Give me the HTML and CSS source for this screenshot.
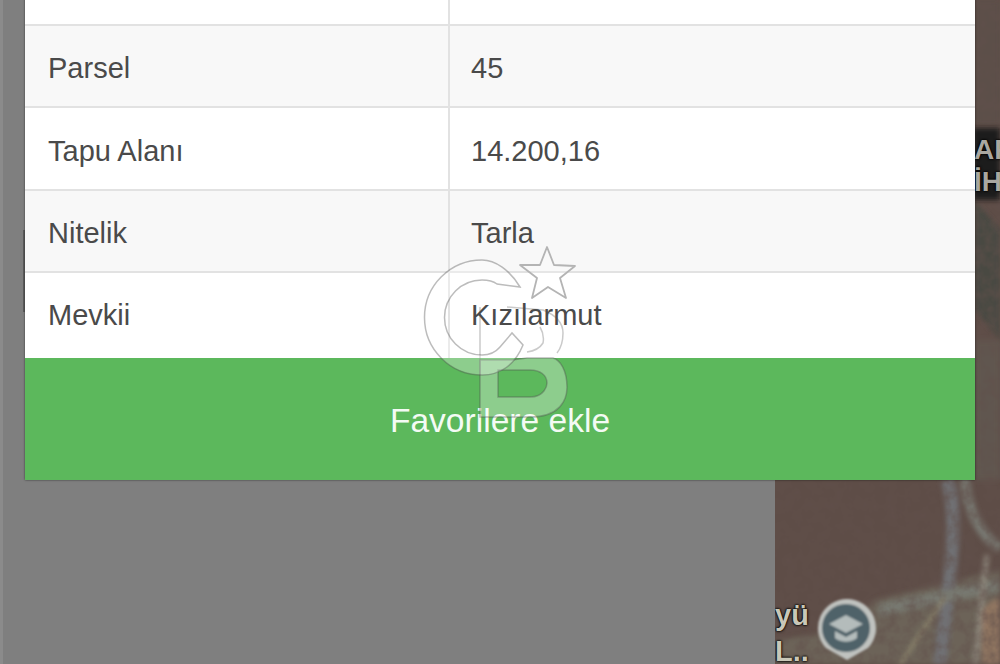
FILE: index.html
```html
<!DOCTYPE html>
<html lang="tr">
<head>
<meta charset="utf-8">
<title>Parsel bilgileri</title>
<link rel="stylesheet" href="styles.css">
</head>
<body>
<div class="backdrop">
  <div class="blank"></div>
  <div class="map">
    <svg class="map-art" viewBox="0 0 225 664" width="225" height="664" aria-hidden="true">
      <defs>
        <filter id="soft"><feGaussianBlur stdDeviation="2.4"/></filter>
        <filter id="softer"><feGaussianBlur stdDeviation="0.9"/></filter>
        <filter id="grain" x="0" y="0" width="100%" height="100%">
          <feTurbulence type="fractalNoise" baseFrequency="0.09" numOctaves="3" seed="7"/>
          <feColorMatrix values="0 0 0 0 .12  0 0 0 0 .08  0 0 0 0 .07  0 0 0 1.1 -.38"/>
        </filter>
      </defs>
      <rect width="225" height="664" fill="#5e4d47"/>
      <g filter="url(#soft)">
        <rect x="200" y="0" width="25" height="125" fill="#5c5049"/>
        <path d="M200 200L225 230V340L200 310Z" fill="#484842"/>
        <rect x="200" y="340" width="25" height="140" fill="#61574f"/>
        <path d="M0 640L60 632L100 600L225 570V664H0Z" fill="#6c6458"/>
        <path d="M172 480C186 520 172 590 165 664" stroke="#6f6f73" stroke-width="13" fill="none"/>
        <path d="M190 478C192 510 205 535 225 548" stroke="#77776f" stroke-width="10" fill="none"/>
        <path d="M104 610L225 585" stroke="#77786f" stroke-width="12" fill="none"/>
        <path d="M200 664C205 630 207 590 212 555" stroke="#8c857a" stroke-width="5" fill="none"/>
        <path d="M125 664L170 598" stroke="#8f876e" stroke-width="3" fill="none"/>
        <path d="M207 664V612C212 603 218 600 225 598V664Z" fill="#8f7560"/>
      </g>
      <rect width="225" height="664" filter="url(#grain)"/>
      <g filter="url(#soft)">
        <rect x="198" y="128" width="27" height="72" fill="#1f1d1c"/>
      </g>
      <g filter="url(#softer)">
        <path d="M72 599A29 29 0 0 1 93 648L72 660L51 648A29 29 0 0 1 72 599Z" fill="#c0c2bf"/>
        <circle cx="71" cy="628" r="24" fill="#4f6269"/>
        <path d="M54 624L71 615L88 624L71 633Z" fill="#b4bcbb"/>
        <path d="M60 631V638C66 643 76 643 82 638V631L71 637Z" fill="#b4bcbb"/>
      </g>
    </svg>
    <span class="map-label label-top">AP<br>İH</span>
    <span class="map-label label-bottom">yü<br>L..</span>
  </div>
</div>

<section class="sheet">
  <table class="details">
    <tbody>
      <tr><th>Ada</th><td>310</td></tr>
      <tr><th>Parsel</th><td>45</td></tr>
      <tr><th>Tapu Alanı</th><td>14.200,16</td></tr>
      <tr><th>Nitelik</th><td>Tarla</td></tr>
      <tr class="last-row"><th>Mevkii</th><td>Kızılarmut</td></tr>
    </tbody>
  </table>
  <button class="favorite" type="button">Favorilere ekle</button>
</section>

<svg class="watermark" viewBox="0 0 160 185" width="160" height="185" aria-hidden="true">
  <path class="mark-fill" d="M60 120V177H110C140 177 147 160 147 147C147 130 140 120 133 118L107 118L92 120ZM78 130V157H110C125 157 127 145 127 143C127 135 120 130 110 130Z" fill-rule="evenodd"/>
  <path class="mark-line" d="M87 67L123 70C138 76 143 85 143 93C143 102 141 108 137 113M120 87C123 92 124 98 123 103C120 108 114 111 107 112M60 67V135"/>
  <path class="mark-fill" d="M100 47C90 30 75 20 62 20A57.500 57.500 0 0 0 62 135C80 135 95 125 103 105L92 93L80 107C75 113 68 115 62 115A37.500 37.500 0 0 1 62 40C68 40 73 41 77 44Z"/>
  <path class="mark-star" d="M127 7L134 25L155 26L140 38L146 58L128 47L112 58L117 38L100 25L120 25Z"/>
</svg>
</body>
</html>
```

FILE: styles.css
```css
* { box-sizing: border-box; }

html, body {
  margin: 0;
  height: 664px;
  overflow: hidden;
  font-family: "Liberation Sans", Arial, sans-serif;
}

body { position: relative; width: 1000px; }

.backdrop {
  display: flex;
  height: 664px;
}

.blank {
  width: 775px;
  background-color: #7f7f7f;
  background-image:
    linear-gradient(#8b8b8b, #8b8b8b),
    linear-gradient(#5c5c5c, #5c5c5c);
  background-repeat: no-repeat;
  background-size: 3px 100%, 2px 82px;
  background-position: 0 0, 23px 230px;
}

.map {
  position: relative;
  flex: 1;
  overflow: hidden;
}

.map-art { display: block; }

.map-label {
  position: absolute;
  font-weight: 700;
  text-shadow: 0 0 3px #000, 0 0 2px #000, 0 0 1px #000;
}

.label-top {
  left: 199px;
  top: 134px;
  font-size: 28px;
  line-height: 32px;
  color: #a9a7a1;
}

.label-bottom {
  left: 0;
  top: 597px;
  font-size: 29px;
  line-height: 36px;
  color: #c9c7b8;
}

.sheet {
  position: absolute;
  left: 25px;
  right: 25px;
  bottom: 184px;
  background: #fff;
  box-shadow: 0 0 2px rgba(0, 0, 0, .6);
}

.details {
  width: 100%;
  border-collapse: collapse;
  table-layout: fixed;
  font-size: 29px;
  color: #4a4a4a;
}

.details tr { height: 82.3px; }
.details tr:nth-child(even) { background: #f8f8f8; }
.details .last-row { height: 86px; }

.details th, .details td {
  padding: 5px 23px 0;
  text-align: left;
  font-weight: 400;
  border-top: 2px solid #e2e2e2;
}

.details .last-row th, .details .last-row td { padding-top: 0; }

.details th {
  width: 424px;
  border-right: 2px solid #e2e2e2;
}

.details td { padding-left: 21px; }

.favorite {
  display: block;
  width: 100%;
  height: 122px;
  padding-top: 4px;
  border: 0;
  background: #5cb85c;
  color: #f4fbf4;
  font: 400 33.600px "Liberation Sans", Arial, sans-serif;
}

.watermark {
  position: absolute;
  left: 420px;
  top: 240px;
}

.mark-fill {
  fill: rgba(255, 255, 255, .3);
  stroke: rgba(80, 80, 80, .38);
  stroke-width: 1.5;
}

.mark-line {
  fill: none;
  stroke: rgba(80, 80, 80, .3);
  stroke-width: 1.5;
}

.mark-star {
  fill: rgba(255, 255, 255, .15);
  stroke: #b4b4b4;
  stroke-width: 1.8;
  stroke-linejoin: round;
}
```
